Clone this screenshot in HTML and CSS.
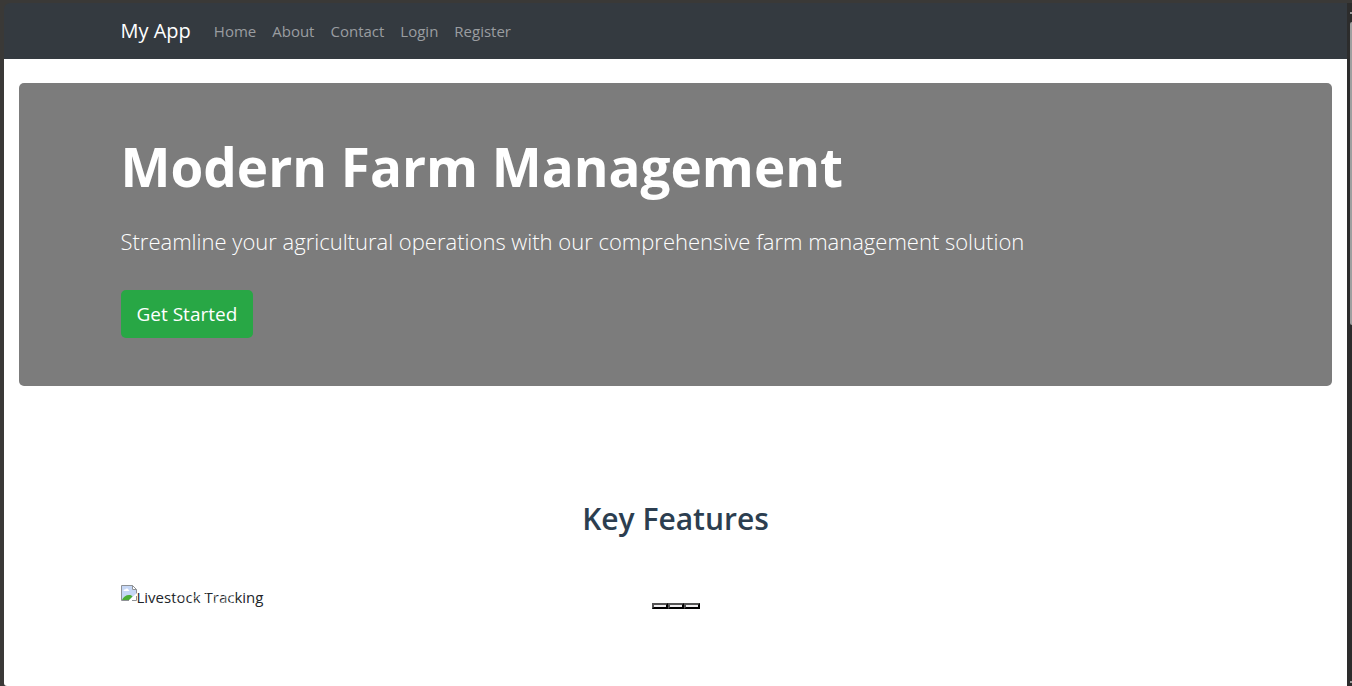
FILE: index.html
```html
<!DOCTYPE html>
<html lang="en">
<head>
<meta charset="utf-8">
<title>My App</title>
<link rel="stylesheet" href="styles.css">
</head>
<body>
<div class="viewport">
  <div class="page">
    <nav class="navbar">
      <div class="container navbar-inner">
        <a class="brand" href="#">My App</a>
        <a class="nav-link" href="#">Home</a>
        <a class="nav-link" href="#">About</a>
        <a class="nav-link" href="#">Contact</a>
        <a class="nav-link" href="#">Login</a>
        <a class="nav-link" href="#">Register</a>
      </div>
    </nav>
    <main class="main">
      <section class="hero">
        <div class="container">
          <h1 class="hero-title">Modern Farm Management</h1>
          <p class="hero-lead">Streamline your agricultural operations with our comprehensive farm management solution</p>
          <a class="btn" href="#">Get Started</a>
        </div>
      </section>
      <section class="features container">
        <h2 class="features-title">Key Features</h2>
        <div class="carousel">
          <div class="slide">
            <svg class="broken" width="16" height="16" viewBox="0 0 16 16" aria-hidden="true">
              <path d="M1 1h10v4h4v4l-7 6H1z" fill="#c6d7f5"/>
              <path d="M.5 15.500V.5h11l4 4v4" fill="none" stroke="#8f9296"/>
              <path d="M11.500.500v4h4z" fill="#fff" stroke="#8f9296"/>
              <path d="M2.500 6c0-1.500 1-1.800 1.700-1.500C5 3 7.500 3.600 7.500 5c1 0 1 1 .5 1z" fill="#fff"/>
              <path d="M1 15c1-3 4-5 7-5 2 0 3 .6 3.500 1.500L8 15z" fill="#4cae35"/>
              <path d="M8 16L16 8.500V10l-6 6z" fill="#fff"/>
              <path d="M.5 15.500H8M11 15.500h4.500V11" fill="none" stroke="#8f9296"/>
            </svg><span>Livestock Tracking</span>
          </div>
          <button class="control" type="button">Previous</button>
          <div class="indicators">
            <button class="dot" type="button" aria-label="Slide 1"></button>
            <button class="dot" type="button" aria-label="Slide 2"></button>
            <button class="dot" type="button" aria-label="Slide 3"></button>
          </div>
        </div>
      </section>
    </main>
  </div>
  <div class="scrollbar" aria-hidden="true">
    <span class="arrow"></span>
    <span class="thumb"></span>
    <span class="arrow"></span>
  </div>
</div>
</body>
</html>
```
FILE: styles.css
```css
* { box-sizing: border-box; }
body {
  margin: 0;
  background: #3a3937;
  color: #212529;
  font: 15px/24px "Segoe UI", "Open Sans", "Noto Sans", sans-serif;
}
a { text-decoration: none; }
.viewport { display: flex; min-height: 100vh; padding: 3px 0 0 4px; }
.page {
  flex: 1;
  min-width: 0;
  display: flex;
  flex-direction: column;
}
.container { width: 100%; max-width: 1140px; margin: 0 auto; padding: 0 15px; }
.navbar { background: #343a40; padding: 8px 0; border-radius: 6px 0 0; }
.navbar-inner { display: flex; align-items: center; height: 40px; }
.brand { color: #fff; font-size: 20px; margin-right: 15px; }
.nav-link { color: #9a9da0; padding: 8px; }
.main { flex: 1; padding: 24px 15px 0; background: #fff; border-radius: 0 0 0 3px; }
.hero { background: #7c7c7c; border-radius: 5px; padding: 48px 0; color: #fff; }
.hero-title { margin: 0 0 20px; font-size: 53px; line-height: 72px; font-weight: 700; }
.hero-lead { margin: 0 0 31px; font-size: 22px; line-height: 36px; font-weight: 300; }
.btn {
  display: block;
  width: fit-content;
  padding: 9px 16px;
  border-radius: 5px;
  background: #28a745;
  color: #fff;
  font-size: 19px;
  line-height: 30px;
}
.features { padding-top: 113px; }
.features-title {
  margin: 0 0 46px;
  text-align: center;
  font-size: 30px;
  line-height: 40px;
  font-weight: 600;
  color: #2c3e50;
}
.carousel { position: relative; }
.slide { display: flex; }
.broken { flex: none; }
.control {
  position: absolute;
  inset: 0 auto 0 0;
  width: 15%;
  border: 0;
  padding: 0;
  background: none;
  color: #fff;
  opacity: .5;
  font: inherit;
}
.indicators {
  position: absolute;
  inset: auto 0 0;
  display: flex;
  justify-content: center;
}
.dot {
  width: 16px;
  height: 6px;
  padding: 0;
  border: 2px outset #000;
  background: #f0eef0;
}
.scrollbar {
  width: 5px;
  padding: 9px 0 3px 3px;
  background: #2c2c2c;
  display: flex;
  flex-direction: column;
}
.thumb { height: 303px; margin-top: 8px; margin-bottom: auto; background: #9f9f9f; border-radius: 3px 0 0 3px; }
.arrow { height: 2px; background: #9f9f9f; }
```
